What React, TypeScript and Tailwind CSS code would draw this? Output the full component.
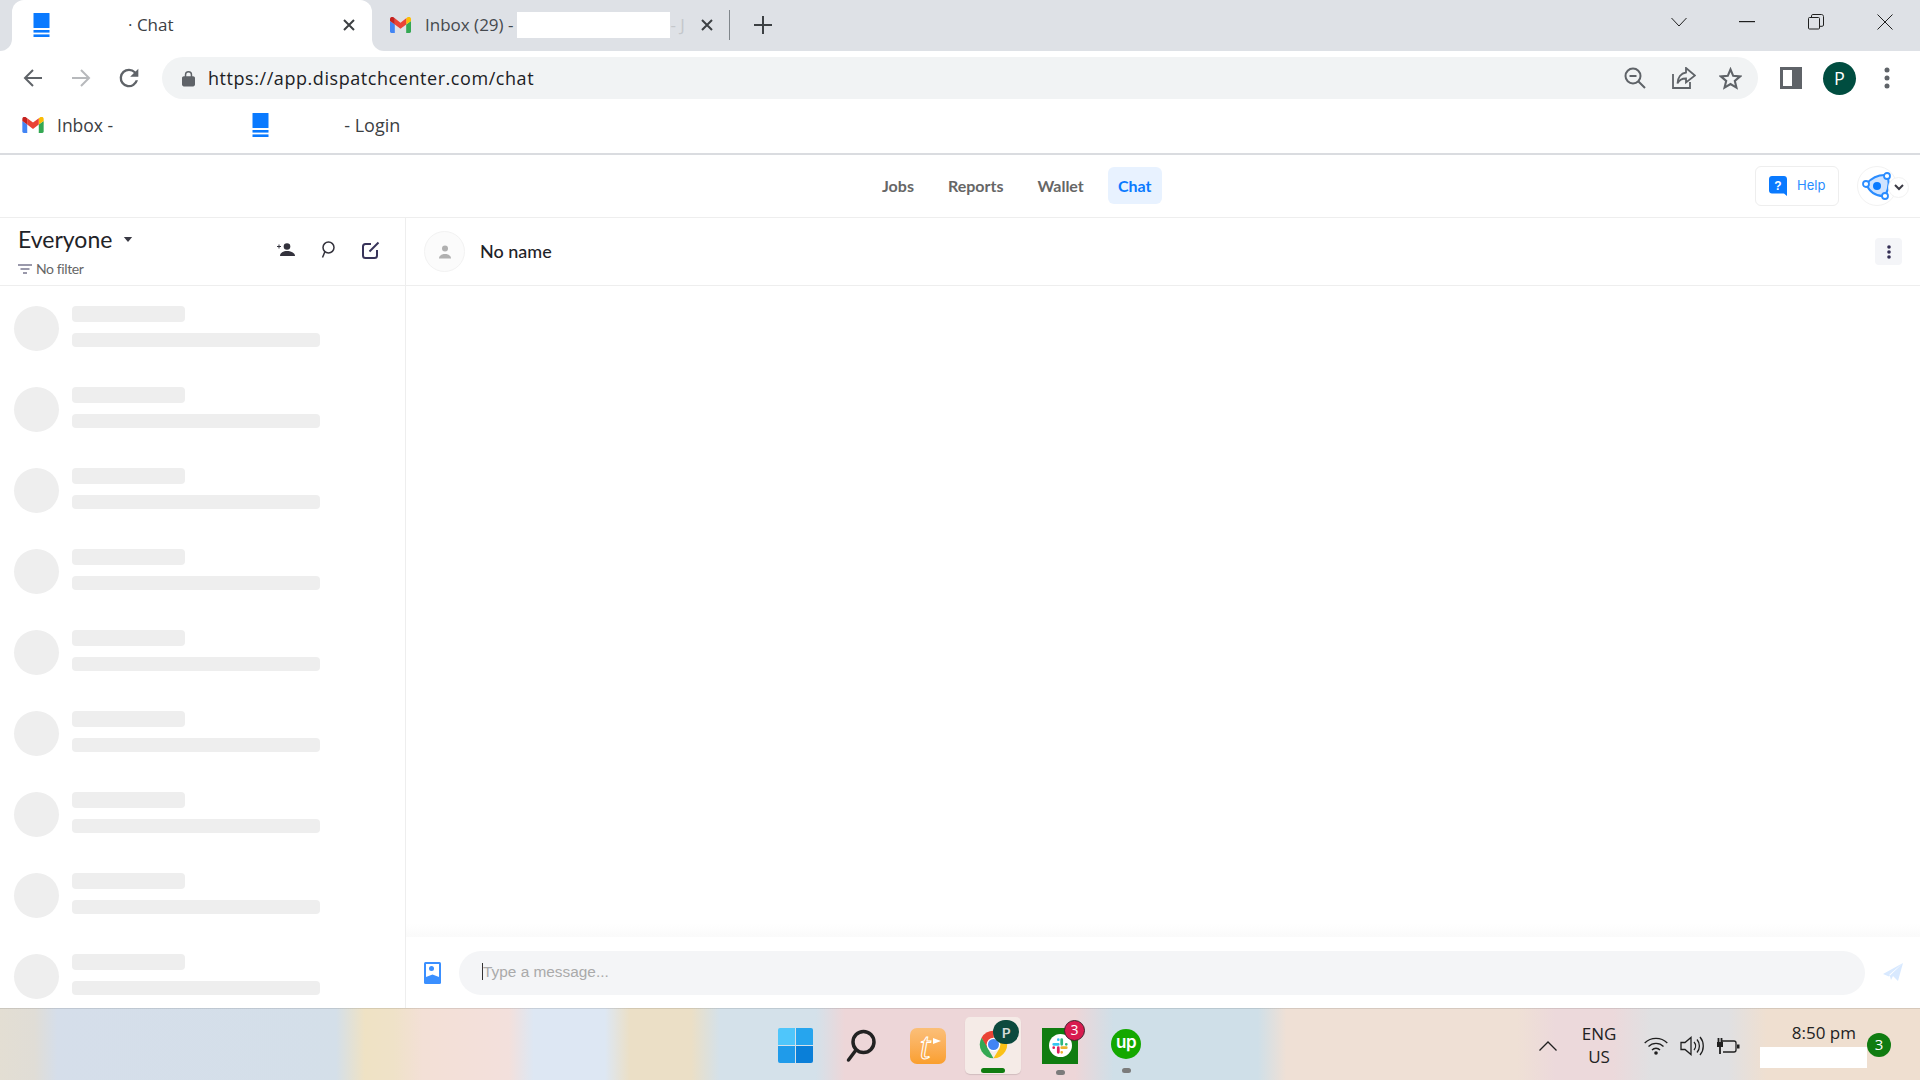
import React from "react";

const Doc = ({ className = "" }: { className?: string }) => (
  <svg viewBox="0 0 17 24" className={className}>
    <rect x="0.5" y="0" width="16" height="15" fill="#0a7aff" rx="0.5" />
    <rect x="0.5" y="17" width="16" height="2.6" fill="#0a7aff" />
    <rect x="0.5" y="21.4" width="16" height="2.6" fill="#0a7aff" />
  </svg>
);

const Gmail = ({ className = "" }: { className?: string }) => (
  <svg viewBox="0 0 24 18" className={className}>
    <path d="M1.6 18H5.5V8.5L0 4.4V16.4C0 17.3.7 18 1.6 18Z" fill="#4285F4" />
    <path d="M18.5 18H22.4C23.3 18 24 17.3 24 16.4V4.4L18.5 8.5Z" fill="#34A853" />
    <path d="M18.5 1.4V8.5L24 4.4V2.2C24 .2 21.7-1 20.1.2Z" fill="#FBBC04" />
    <path d="M5.5 8.5V1.4L12 6.3 18.5 1.4V8.5L12 13.4Z" fill="#EA4335" />
    <path d="M0 2.2V4.4L5.5 8.5V1.4L3.9.2C2.3-1 0 .2 0 2.2Z" fill="#C5221F" />
  </svg>
);

const CloseX = ({ className = "" }: { className?: string }) => (
  <svg viewBox="0 0 14 14" className={className} fill="none" stroke="#3c4043" strokeWidth="2">
    <path d="M2 2L12 12M12 2L2 12" />
  </svg>
);

const Skeleton = () => (
  <div className="flex h-[81px] shrink-0 pl-[14px]">
    <div className="h-[45px] w-[45px] rounded-full bg-[#eeeeee]" />
    <div className="ml-[13px] flex flex-col">
      <div className="h-[16px] w-[113px] rounded-[4px] bg-[#eeeeee]" />
      <div className="mt-[11px] h-[14px] w-[248px] rounded-[4px] bg-[#eeeeee]" />
    </div>
  </div>
);

const NavItem = ({ label, active, className = "" }: { label: string; active?: boolean; className?: string }) => (
  <div
    className={`flex h-[37px] items-center justify-center rounded-[6px] pt-[1px] text-[16px] font-bold ${
      active ? "w-[54px] bg-[#e8f2ff] text-[#0a7aff]" : "text-[#666666]"
    } ${className}`}
  >
    {label}
  </div>
);

export default function App() {
  return (
    <div className="flex h-[1080px] w-[1920px] flex-col overflow-hidden bg-white font-['Lato',sans-serif]">
      {/* Tab strip */}
      <div className="flex h-[51px] shrink-0 items-center bg-[#dee1e6] pb-[1px] pl-[12px] font-['Open_Sans',sans-serif] text-[17px] text-[#45494e]">
        <div className="relative -mb-[1px] flex h-[51px] w-[360px] items-center self-end rounded-t-[12px] bg-white pb-[1px] pl-[21px]">
          <div className="absolute -left-[12px] bottom-0 h-[12px] w-[12px] bg-white">
            <div className="h-full w-full rounded-br-[12px] bg-[#dee1e6]" />
          </div>
          <div className="absolute -right-[12px] bottom-0 h-[12px] w-[12px] bg-white">
            <div className="h-full w-full rounded-bl-[12px] bg-[#dee1e6]" />
          </div>
          <Doc className="h-[24px] w-[17px]" />
          <span className="ml-[78px] text-[#3c4043]">· Chat</span>
          <CloseX className="ml-auto mr-[16px] h-[14px] w-[14px]" />
        </div>
        <Gmail className="ml-[18px] h-[16px] w-[21px]" />
        <span className="ml-[14px] whitespace-nowrap">Inbox (29) -</span>
        <div className="ml-[4px] h-[26px] w-[153px] bg-white" />
        <span className="whitespace-nowrap text-[#c4c7cb]">- J</span>
        <CloseX className="ml-[15px] h-[14px] w-[14px]" />
        <div className="ml-[15px] h-[30px] w-[1px] bg-[#80868b]" />
        <svg viewBox="0 0 18 18" className="ml-[24px] h-[18px] w-[18px]" fill="none" stroke="#3c4043" strokeWidth="2">
          <path d="M9 0V18M0 9H18" />
        </svg>
        <div className="mb-[7px] ml-auto flex items-center">
          <svg viewBox="0 0 16 10" className="h-[10px] w-[16px]" fill="none" stroke="#1f1f1f" strokeWidth="1">
            <path d="M.5 1L8 9L15.5 1" />
          </svg>
          <svg viewBox="0 0 16 2" className="ml-[52px] h-[2px] w-[16px]">
            <rect width="16" height="1.2" fill="#1f1f1f" />
          </svg>
          <svg viewBox="0 0 16 16" className="ml-[53px] h-[16px] w-[16px]" fill="none" stroke="#1f1f1f" strokeWidth="1">
            <rect x=".5" y="3.5" width="11" height="11.5" rx="1" />
            <path d="M3.5 3V1.8C3.5 1 4 .5 4.8 .5H13.5C14.6 .5 15.5 1.4 15.5 2.5V11C15.5 11.8 15 12.3 14.2 12.3H12" />
          </svg>
          <svg viewBox="0 0 16 16" className="ml-[53px] mr-[27px] h-[16px] w-[16px]" fill="none" stroke="#1f1f1f" strokeWidth="1">
            <path d="M.5 .5L15.5 15.5M15.5 .5L.5 15.5" />
          </svg>
        </div>
      </div>

      {/* Toolbar */}
      <div className="flex h-[51px] shrink-0 items-center bg-white pt-[3px] font-['Open_Sans',sans-serif]">
        <svg viewBox="0 0 20 20" className="ml-[23px] h-[20px] w-[20px]" fill="none" stroke="#5f6368" strokeWidth="2">
          <path d="M19 10H2M10 2L2 10L10 18" />
        </svg>
        <svg viewBox="0 0 20 20" className="ml-[28px] h-[20px] w-[20px]" fill="none" stroke="#b7b9bc" strokeWidth="2">
          <path d="M1 10H18M10 2L18 10L10 18" />
        </svg>
        <svg viewBox="0 0 24 24" className="ml-[24px] h-[28px] w-[28px]" fill="#5f6368">
          <path d="M17.65 6.35A7.96 7.96 0 0 0 12 4a8 8 0 1 0 7.73 10h-2.08A6 6 0 1 1 12 6c1.66 0 3.14.69 4.22 1.78L13 11h7V4z" />
        </svg>
        <div className="ml-[19px] flex h-[42px] w-[1596px] items-center rounded-full bg-[#f1f3f4] pl-[20px]">
          <svg viewBox="0 0 14 17" className="h-[17px] w-[13px]" fill="#5f6368">
            <path d="M12 6h-1V4.5a4 4 0 0 0-8 0V6H2C1 6 0 6.800 0 8v7c0 1.100 1 2 2 2h10c1 0 2-.9 2-2V8c0-1.200-1-2-2-2zM4.600 6V4.500a2.400 2.400 0 0 1 4.800 0V6z" />
          </svg>
          <span className="ml-[13px] text-[18px] tracking-[0.56px] text-[#202124]">https://app.dispatchcenter.com/chat</span>
          <div className="ml-auto mr-[16px] flex items-center">
            <svg viewBox="0 0 22 22" className="h-[22px] w-[22px]" fill="none" stroke="#5f6368" strokeWidth="2">
              <circle cx="9" cy="9" r="7.500" />
              <path d="M5.500 9H12.500M14.500 14.500L21 21" />
            </svg>
            <svg viewBox="0 0 24 22" className="ml-[26px] h-[22px] w-[24px]" fill="none" stroke="#5f6368" strokeWidth="1.800">
              <path d="M1 7V21H18V15" />
              <path d="M14 1L23 8.500L14 15.500V11.500C9.500 11.500 7 13 5.500 16.500C5.500 10.500 9 6 14 5.500Z" />
            </svg>
            <svg viewBox="0 0 24 24" className="ml-[23px] h-[23px] w-[23px]" fill="none" stroke="#5f6368" strokeWidth="2.200">
              <path d="M12 2.500L14.800 9.200L22 9.800L16.500 14.500L18.200 21.500L12 17.800L5.800 21.500L7.500 14.500L2 9.800L9.200 9.200Z" />
            </svg>
          </div>
        </div>
        <div className="ml-[22px] flex h-[22px] w-[22px] items-center border-[3px] border-[#5f6368] bg-white">
          <div className="ml-auto h-full w-[7px] bg-[#5f6368]" />
        </div>
        <div className="ml-[21px] flex h-[33px] w-[33px] items-center justify-center rounded-full bg-[#004d40] text-[18px] text-white">
          P
        </div>
        <svg viewBox="0 0 6 22" className="ml-[28px] h-[22px] w-[6px]" fill="#5f6368">
          <circle cx="3" cy="3" r="2.500" />
          <circle cx="3" cy="11" r="2.500" />
          <circle cx="3" cy="19" r="2.500" />
        </svg>
      </div>

      {/* Bookmarks */}
      <div className="flex h-[51px] shrink-0 items-center bg-white pb-[5px] font-['Open_Sans',sans-serif] text-[17px] text-[#3c4043]">
        <Gmail className="ml-[22px] h-[16px] w-[22px]" />
        <span className="ml-[13px] text-[17.5px]">Inbox -</span>
        <Doc className="ml-[139px] h-[24px] w-[17px]" />
        <span className="ml-[75px] text-[18px]">- Login</span>
      </div>
      <div className="h-[2px] shrink-0 bg-[#dadce0]" />

      {/* App nav */}
      <div className="flex h-[63px] shrink-0 items-center border-b border-[#eeeeee] pb-[1px]">
        <div className="ml-[882px] flex items-center">
          <NavItem label="Jobs" />
          <NavItem label="Reports" className="ml-[34px]" />
          <NavItem label="Wallet" className="ml-[34px]" />
          <NavItem label="Chat" active className="ml-[24px]" />
        </div>
        <div className="ml-auto flex items-center">
          <div className="flex h-[40px] w-[84px] items-center rounded-[6px] border border-[#eeeeee] pl-[13px]">
            <svg viewBox="0 0 18 20" className="h-[20px] w-[18px]">
              <path d="M3 0H15C16.700 0 18 1.300 18 3V20L15 17.500H3C1.300 17.500 0 16.200 0 14.500V3C0 1.300 1.300 0 3 0Z" fill="#0a7aff" />
              <text x="9" y="13.500" textAnchor="middle" fontSize="12" fontWeight="700" fill="#fff" fontFamily="Liberation Sans">?</text>
            </svg>
            <span className="ml-[10px] font-['Inter',sans-serif] text-[13px] text-[#2a8cff]">Help</span>
          </div>
          <div className="relative ml-[18px] mr-[23px] flex h-[40px] w-[40px] items-center justify-center rounded-full border border-[#f2f2f2]">
            <svg viewBox="0 0 30 30" className="h-[30px] w-[30px]">
              <path d="M4 13Q13 3 25 4Q29 14 23 25Q10 26 4 13Z" fill="#cfe3ff" stroke="#2a8cff" strokeWidth="2" />
              <circle cx="15" cy="15" r="4" fill="#0a7aff" />
              <circle cx="25" cy="5" r="3" fill="#fff" stroke="#2a8cff" strokeWidth="1.800" />
              <circle cx="4" cy="13" r="3" fill="#fff" stroke="#2a8cff" strokeWidth="1.800" />
              <circle cx="23" cy="25" r="3" fill="#fff" stroke="#2a8cff" strokeWidth="1.800" />
            </svg>
            <div className="absolute -right-[13px] top-[10px] flex h-[21px] w-[21px] items-center justify-center rounded-full border border-[#f2f2f2] bg-white">
              <svg viewBox="0 0 10 7" className="h-[7px] w-[10px]" fill="none" stroke="#3a3a44" strokeWidth="2">
                <path d="M1 1L5 5L9 1" />
              </svg>
            </div>
          </div>
        </div>
      </div>

      {/* Body */}
      <div className="flex min-h-0 flex-1">
        <div className="flex w-[406px] shrink-0 flex-col border-r border-[#eeeeee]">
          <div className="flex h-[68px] shrink-0 border-b border-[#eeeeee] pl-[18px]">
            <div className="flex flex-col">
              <div className="mt-[5px] flex h-[33px] items-center">
                <span className="text-[23px] leading-none text-[#1f2328]">Everyone</span>
                <svg viewBox="0 0 10 6" className="ml-[11px] h-[5px] w-[10px]" fill="#3a3a44">
                  <path d="M0 0H10L5 6Z" />
                </svg>
              </div>
              <div className="mt-[6px] flex items-center text-[14px] leading-none tracking-[-0.4px] text-[#666666]">
                <svg viewBox="0 0 14 10" className="h-[10px] w-[14px]" fill="none" stroke="#7a7890" strokeWidth="1.300">
                  <path d="M0 1H14M2.500 5H11.500M5 9H9" />
                </svg>
                <span className="ml-[4px]">No filter</span>
              </div>
            </div>
            <div className="mb-[4px] ml-auto flex items-center">
              <svg viewBox="0 0 18 13" className="h-[13px] w-[18px]" fill="#33323c">
                <circle cx="10" cy="3.500" r="3.300" />
                <path d="M3 13C3 9.500 6.500 8 10 8S18 9.500 18 13Z" />
                <path d="M0 3.500H4M2 1.500V5.500" stroke="#33323c" strokeWidth="1" />
              </svg>
              <svg viewBox="0 0 14 18" className="ml-[26px] h-[18px] w-[14px]" fill="none" stroke="#33323c" strokeWidth="1.500">
                <circle cx="7.500" cy="6.500" r="5.500" />
                <path d="M3.800 11L1.500 16.500" />
              </svg>
              <svg viewBox="0 0 18 18" className="ml-[27px] mr-[25px] h-[18px] w-[18px]" fill="none" stroke="#38345a" strokeWidth="2">
                <path d="M9 3H3.500C2 3 1 4 1 5.500V14.500C1 16 2 17 3.500 17H12.500C14 17 15 16 15 14.500V9" />
                <path d="M7.500 10.500L16.500 1.500" />
              </svg>
            </div>
          </div>
          <div className="flex min-h-0 flex-1 flex-col overflow-hidden pt-[20px]">
            {Array.from({ length: 9 }).map((_, i) => (
              <Skeleton key={i} />
            ))}
          </div>
        </div>

        <div className="flex min-w-0 flex-1 flex-col">
          <div className="flex h-[68px] shrink-0 items-center border-b border-[#eeeeee] pl-[18px] pr-[18px]">
            <div className="flex h-[41px] w-[41px] items-center justify-center rounded-full border border-[#f2f2f2] bg-[#fbfbfb]">
              <svg viewBox="0 0 14 14" className="h-[14px] w-[14px]" fill="#b0b0b0">
                <circle cx="7" cy="3.500" r="3" />
                <path d="M1 13.500C1 10.500 4 9 7 9S13 10.500 13 13.500Z" />
              </svg>
            </div>
            <span className="ml-[15px] text-[18px] font-medium text-[#1f2328]">No name</span>
            <div className="ml-auto flex h-[27px] w-[27px] items-center justify-center rounded-[4px] bg-[#f4f5f8]">
              <svg viewBox="0 0 4 14" className="h-[14px] w-[4px]" fill="#332e54">
                <circle cx="2" cy="2" r="1.800" />
                <circle cx="2" cy="7" r="1.800" />
                <circle cx="2" cy="12" r="1.800" />
              </svg>
            </div>
          </div>
          <div className="min-h-0 flex-1 bg-gradient-to-b from-white from-[98%] to-[#fafafa]" />
          <div className="flex h-[71px] shrink-0 items-center pl-[18px]">
            <svg viewBox="0 0 17 22" className="h-[22px] w-[17px]">
              <rect width="17" height="22" rx="1.500" fill="#3a8fff" />
              <path d="M2 2H15V15L8.500 12.500L2 15Z" fill="#fff" />
              <circle cx="7.500" cy="6.500" r="2.500" fill="#3a8fff" />
            </svg>
            <div className="ml-[18px] flex h-[44px] w-[1406px] items-center rounded-full bg-[#f4f5f7] pb-[2px] pl-[23px]">
              <div className="h-[17px] w-[1px] bg-[#333333]" />
              <span className="font-['Liberation_Sans',sans-serif] text-[15.4px] text-[#aaaaaa]">Type a message...</span>
            </div>
            <svg viewBox="0 0 20 20" className="ml-[18px] h-[20px] w-[20px]" fill="#d8e9ff">
              <path d="M20 0L15 18L10 13L8 17L6.500 11.500ZM20 0L0 11L6 13.500Z" />
            </svg>
          </div>
        </div>
      </div>

      {/* Taskbar */}
      <div className="flex h-[72px] shrink-0 items-center border-t border-black/10 bg-[linear-gradient(90deg,#e3ded3_0%,#e0ddd6_1.800%,#d5deea_3%,#d4dfe9_17.500%,#efe2c4_19%,#efe2c8_20.500%,#f3e0d6_22%,#f3e0dc_26.500%,#dde7f3_27.800%,#dde7f3_31.500%,#ebdfc6_32.800%,#ebdfc6_36%,#d4e1ea_37.500%,#d4e1ea_42.500%,#edd6d8_44%,#edd6d8_56%,#cfdfe8_58%,#cfdfe8_65.500%,#efe0d5_67%,#efe0d5_79%,#ecd9db_81%,#ecd9db_84%,#e0e0e2_86%,#e0e0e2_90%,#efdfd0_92%,#efdfd0_100%)] pt-[2px]">
        {/* Windows logo */}
        <div className="ml-[778px] grid h-[35px] w-[35px] grid-cols-2 grid-rows-2 gap-[1px]">
          <div className="rounded-tl-[2px] bg-[#4fc6fb]" />
          <div className="rounded-tr-[2px] bg-[#26a5ee]" />
          <div className="rounded-bl-[2px] bg-[#1f9bea]" />
          <div className="rounded-br-[2px] bg-[#0a7fd8]" />
        </div>
        {/* Search */}
        <svg viewBox="0 0 30 34" className="ml-[33px] h-[34px] w-[30px]" fill="none" stroke="#222222" strokeWidth="3.500" strokeLinecap="round">
          <circle cx="17.500" cy="13" r="10.500" />
          <path d="M10 21L2.500 31" />
        </svg>
        {/* Tally */}
        <div className="relative ml-[34px] flex h-[36px] w-[36px] items-center justify-center rounded-[7px] bg-gradient-to-b from-[#fbbf78] to-[#fa9f2c] pr-[6px]">
          <span className="font-['Liberation_Serif',serif] text-[38px] italic leading-[36px] text-transparent [-webkit-text-stroke:1px_white]">t</span>
          <svg viewBox="0 0 8 6" className="absolute left-[23px] top-[10px] h-[6px] w-[8px]" fill="#fff">
            <path d="M0 0L8 3L0 6Z" />
          </svg>
        </div>
        {/* Chrome */}
        <div className="relative ml-[19px] flex h-[57px] w-[56px] flex-col items-center rounded-[5px] bg-[#f5ebe7] shadow-[0_1px_1px_rgba(0,0,0,0.12)]">
          <svg viewBox="0 0 48 48" className="mt-[11px] h-[33px] w-[33px]">
            <path d="M24 4A20 20 0 0 1 41.300 14H24Z" fill="#ea4335" />
            <path d="M6.700 14A20 20 0 0 1 24 4V14H24L14 30Z" fill="#ea4335" />
            <path d="M6.700 14L16 30L24 44A20 20 0 0 1 6.700 14Z" fill="#34a853" />
            <path d="M41.300 14A20 20 0 0 1 24 44L33 29L24 14Z" fill="#fbc116" />
            <circle cx="24" cy="24" r="10" fill="#fff" />
            <circle cx="24" cy="24" r="8" fill="#4285f4" />
          </svg>
          <div className="absolute left-[28px] top-[3px] flex h-[24px] w-[26px] items-center justify-center rounded-full bg-[#0c4a3e] text-[14px] font-bold text-[#cfd8d6]">P</div>
          <div className="mb-[1px] mt-auto h-[5px] w-[24px] rounded-full bg-[#107c10]" />
        </div>
        {/* Slack */}
        <div className="relative ml-[21px] flex w-[36px] flex-col items-center">
          <div className="mt-[11px] flex h-[36px] w-[36px] items-center justify-center bg-[#107c10]">
            <div className="flex h-[23px] w-[23px] items-center justify-center rounded-full bg-white">
              <svg viewBox="0 0 14 14" className="h-[16px] w-[16px]" strokeWidth="2.400" strokeLinecap="round" fill="none">
                <path d="M1.500 5.500H5.500M5.500 1.500V1.510" stroke="#36c5f0" />
                <path d="M8.500 1.500V5.500M12.500 5.500V5.510" stroke="#2eb67d" />
                <path d="M8.500 8.500H12.500M8.500 12.500V12.510" stroke="#ecb22e" />
                <path d="M5.500 8.500V12.500M1.500 8.500V8.510" stroke="#e01e5a" />
              </svg>
            </div>
          </div>
          <div className="absolute left-[22px] top-[3px] flex h-[21px] w-[21px] items-center justify-center rounded-full border border-[#40222c] bg-[#d81b4f] font-['Open_Sans',sans-serif] text-[14px] leading-none text-white">3</div>
          <div className="mt-[6px] h-[5px] w-[9px] rounded-full bg-[#7b7b7b]" />
        </div>
        {/* Upwork */}
        <div className="ml-[33px] flex w-[30px] flex-col items-center">
          <div className="mt-[11px] flex h-[30px] w-[30px] items-center justify-center rounded-full bg-[#14a800] pb-[3px] font-['Inter',sans-serif] text-[17px] font-semibold leading-none tracking-[-0.5px] text-white">up</div>
          <div className="mt-[9px] h-[5px] w-[9px] rounded-full bg-[#7b7b7b]" />
        </div>
        {/* Tray */}
        <svg viewBox="0 0 18 10" className="ml-[398px] h-[10px] w-[18px]" fill="none" stroke="#1f1f1f" strokeWidth="1.300">
          <path d="M.5 9.500L9 1L17.500 9.500" />
        </svg>
        <div className="mb-[2px] ml-[25px] flex w-[34px] flex-col items-center font-['Open_Sans',sans-serif] text-[17px] leading-[23px] text-[#222222]">
          <span>ENG</span>
          <span>US</span>
        </div>
        <svg viewBox="0 0 24 18" className="ml-[28px] h-[18px] w-[24px]" fill="none" stroke="#1f1f1f" strokeWidth="1.300">
          <path d="M.7 6A16 16 0 0 1 23.300 6M4.500 9.500A10.500 10.500 0 0 1 19.500 9.500M8 13A5.500 5.500 0 0 1 16 13" />
          <circle cx="12" cy="16" r="1.800" fill="#1f1f1f" stroke="none" />
        </svg>
        <svg viewBox="0 0 24 20" className="ml-[12px] h-[20px] w-[24px]" fill="none" stroke="#1f1f1f" strokeWidth="1.300">
          <path d="M1 6.500H5L11 1.500V18.500L5 13.500H1Z" />
          <path d="M14 6A6 6 0 0 1 14 14M17 3.500A10 10 0 0 1 17 16.500M20 1A14 14 0 0 1 20 19" />
        </svg>
        <svg viewBox="0 0 24 16" className="ml-[12px] h-[16px] w-[24px]" fill="none" stroke="#1f1f1f" strokeWidth="1.300">
          <path d="M6 3H18C19 3 20 4 20 5V12C20 13 19 14 18 14H7" />
          <rect x="21" y="6.500" width="2.500" height="4" fill="#1f1f1f" stroke="none" />
          <rect x="1" y="4" width="6" height="5" fill="#1f1f1f" stroke="none" />
          <path d="M2.500 0V4M5.500 0V4M4 9V16" strokeWidth="1.800" />
        </svg>
        <div className="ml-[20px] flex w-[107px] flex-col items-end">
          <span className="mr-[11px] -translate-y-[1px] font-['Open_Sans',sans-serif] text-[17px] leading-[20px] text-[#222222]">8:50 pm</span>
          <div className="mt-[3px] h-[21px] w-[107px] bg-white" />
        </div>
        <div className="flex h-[24px] w-[24px] -translate-y-[1px] items-center justify-center rounded-full bg-[#107c10] font-['Open_Sans',sans-serif] text-[15px] leading-none text-white">3</div>
      </div>
    </div>
  );
}
